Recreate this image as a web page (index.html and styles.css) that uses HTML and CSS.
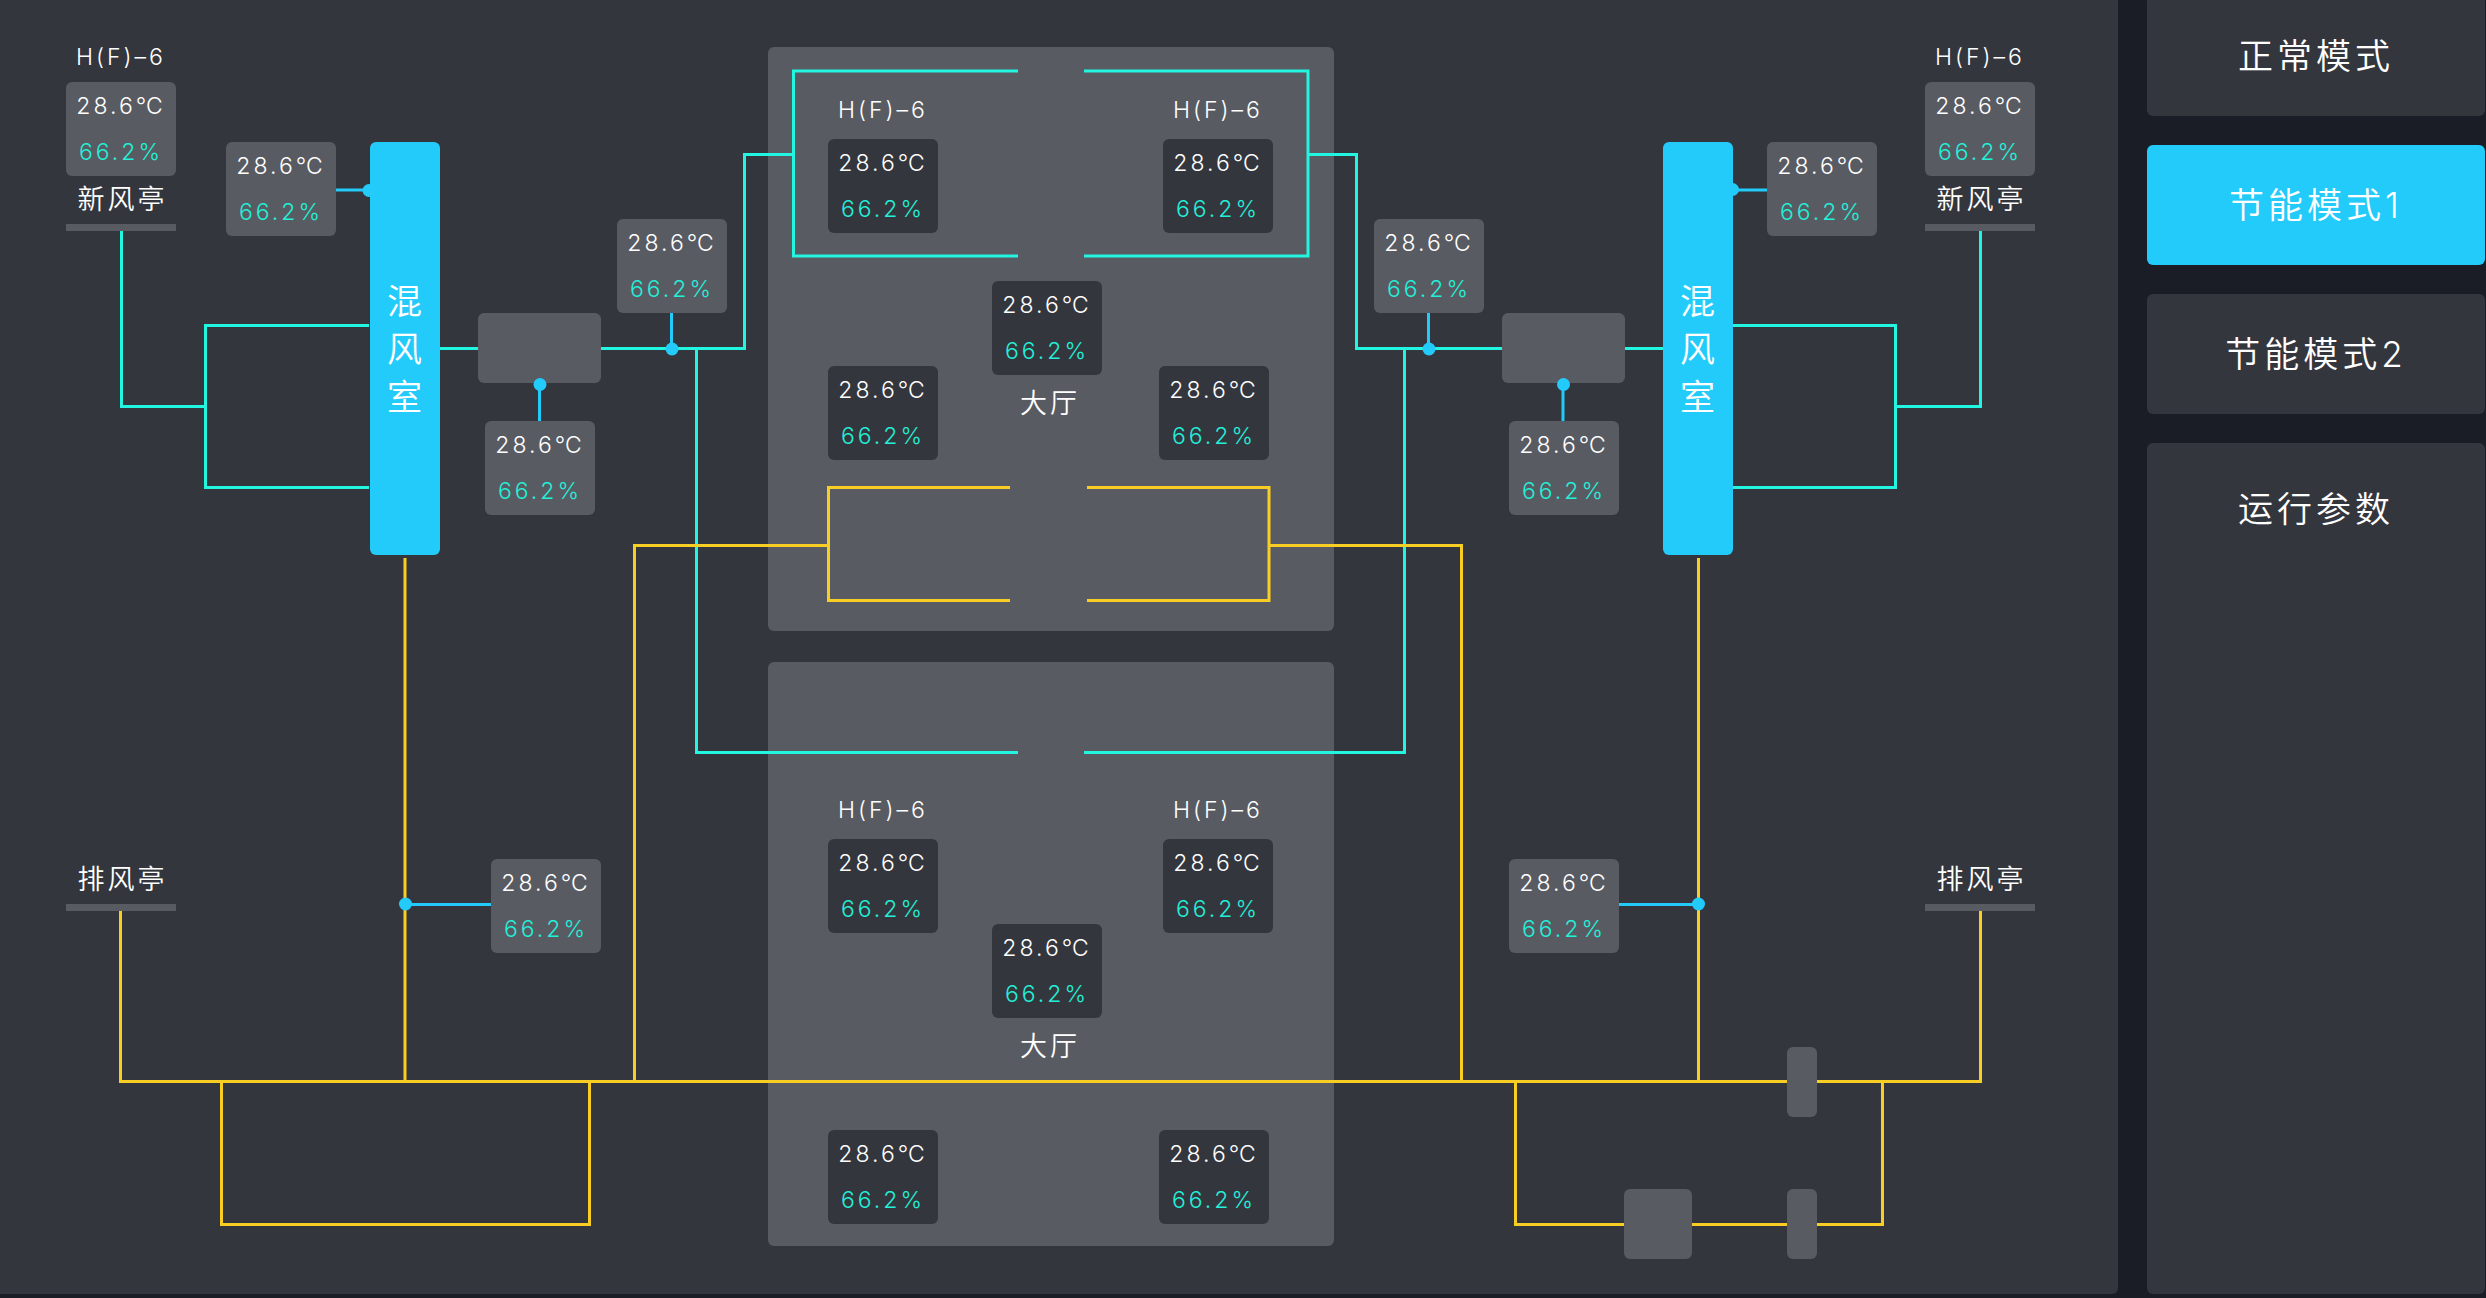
FILE: index.html
```
<!DOCTYPE html>
<html lang="zh-CN">
<head>
<meta charset="utf-8">
<title>通风模式</title>
<link rel="stylesheet" href="styles.css">
</head>
<body>
<main class="diagram">
  <section class="hall hall-upper"></section>
  <section class="hall hall-lower"></section>

  <svg class="wires" aria-hidden="true">
    <g class="supply">
      <path d="M121.500 231V406.500H205.500"/>
      <path d="M369 325.500H205.500V487.500H369"/>
      <path d="M440 348.500H744.500V154.500H793.500"/>
      <path d="M1018 71H793.500V256H1018"/>
      <path d="M696.500 348.500V752.500H1018"/>
      <path d="M1980.500 231V406.500H1895.500"/>
      <path d="M1733 325.500H1895.500V487.500H1733"/>
      <path d="M1663 348.500H1356.500V154.500H1308"/>
      <path d="M1084 71H1308V256H1084"/>
      <path d="M1404.500 348.500V752.500H1084"/>
    </g>
    <g class="exhaust">
      <path d="M120.500 911V1081.500H1980.500V911"/>
      <path d="M221.500 1081.500V1224.500H589.500V1081.500"/>
      <path d="M1515.500 1081.500V1224.500H1882.500V1081.500"/>
      <path d="M405 558V1081.500"/>
      <path d="M1698.500 558V1081.500"/>
      <path d="M828.500 545.500H634.500V1081.500"/>
      <path d="M1010 487.500H828.500V600.500H1010"/>
      <path d="M1269 545.500H1461.500V1081.500"/>
      <path d="M1087 487.500H1269V600.500H1087"/>
    </g>
  </svg>

  <div class="station station-left">
    <span class="code">H(F)–6</span>
    <div class="reading"><span>28.6℃</span><span class="humidity">66.2%</span></div>
    <span class="name">新风亭</span>
    <i class="grille"></i>
  </div>
  <div class="station station-right">
    <span class="code">H(F)–6</span>
    <div class="reading"><span>28.6℃</span><span class="humidity">66.2%</span></div>
    <span class="name">新风亭</span>
    <i class="grille"></i>
  </div>
  <div class="station outlet-left"><span class="name">排风亭</span><i class="grille"></i></div>
  <div class="station outlet-right"><span class="name">排风亭</span><i class="grille"></i></div>

  <div class="mixer mixer-left">混风室</div>
  <div class="mixer mixer-right">混风室</div>
  <i class="unit fan-left"></i>
  <i class="unit fan-right"></i>
  <i class="unit valve-top"></i>
  <i class="unit valve-bottom"></i>
  <i class="unit purifier"></i>

  <div class="reading node mix-in-left"><span>28.6℃</span><span class="humidity">66.2%</span></div>
  <div class="reading node mix-in-right"><span>28.6℃</span><span class="humidity">66.2%</span></div>
  <div class="reading node fan-sensor-left"><span>28.6℃</span><span class="humidity">66.2%</span></div>
  <div class="reading node fan-sensor-right"><span>28.6℃</span><span class="humidity">66.2%</span></div>
  <div class="reading node supply-left"><span>28.6℃</span><span class="humidity">66.2%</span></div>
  <div class="reading node supply-right"><span>28.6℃</span><span class="humidity">66.2%</span></div>
  <div class="reading node return-left"><span>28.6℃</span><span class="humidity">66.2%</span></div>
  <div class="reading node return-right"><span>28.6℃</span><span class="humidity">66.2%</span></div>

  <div class="indoor upper-a">
    <span class="code">H(F)–6</span>
    <div class="reading"><span>28.6℃</span><span class="humidity">66.2%</span></div>
  </div>
  <div class="indoor upper-b">
    <span class="code">H(F)–6</span>
    <div class="reading"><span>28.6℃</span><span class="humidity">66.2%</span></div>
  </div>
  <div class="indoor upper-c">
    <div class="reading"><span>28.6℃</span><span class="humidity">66.2%</span></div>
    <span class="name">大厅</span>
  </div>
  <div class="indoor upper-d"><div class="reading"><span>28.6℃</span><span class="humidity">66.2%</span></div></div>
  <div class="indoor upper-e"><div class="reading"><span>28.6℃</span><span class="humidity">66.2%</span></div></div>

  <div class="indoor lower-a">
    <span class="code">H(F)–6</span>
    <div class="reading"><span>28.6℃</span><span class="humidity">66.2%</span></div>
  </div>
  <div class="indoor lower-b">
    <span class="code">H(F)–6</span>
    <div class="reading"><span>28.6℃</span><span class="humidity">66.2%</span></div>
  </div>
  <div class="indoor lower-c">
    <div class="reading"><span>28.6℃</span><span class="humidity">66.2%</span></div>
    <span class="name">大厅</span>
  </div>
  <div class="indoor lower-d"><div class="reading"><span>28.6℃</span><span class="humidity">66.2%</span></div></div>
  <div class="indoor lower-e"><div class="reading"><span>28.6℃</span><span class="humidity">66.2%</span></div></div>

  <svg class="wires probes" aria-hidden="true">
    <path d="M336 190H369M539.500 384V421M671.500 313V349M405 904.500H491M1733 190H1767M1563 384V421M1428.500 313V349M1619 904.500H1699"/>
    <circle cx="369" cy="190.500" r="6.500"/>
    <circle cx="540" cy="384.500" r="6.500"/>
    <circle cx="672" cy="349" r="6.500"/>
    <circle cx="405.500" cy="904" r="6.500"/>
    <circle cx="1732.500" cy="189.500" r="6.500"/>
    <circle cx="1563.500" cy="384.500" r="6.500"/>
    <circle cx="1429" cy="349" r="6.500"/>
    <circle cx="1698.500" cy="904" r="6.500"/>
  </svg>
</main>

<aside class="sidebar">
  <button class="mode" type="button">正常模式</button>
  <button class="mode active" type="button" aria-pressed="true">节能模式1</button>
  <button class="mode" type="button">节能模式2</button>
  <section class="params"><h2>运行参数</h2></section>
</aside>
</body>
</html>
```
FILE: styles.css
```
:root {
  --page: #1b1d26;
  --panel: #34363e;
  --block: #595b62;
  --blue: #23cbfa;
  --teal: #22f6e1;
  --humidity: #22f0d8;
  --yellow: #f8ce24;
}

* { box-sizing: border-box; }

body {
  margin: 0;
  min-height: 100vh;
  padding: 0 1px 4px 0;
  display: flex;
  gap: 29px;
  background: var(--page);
  color: #fff;
  font-family: Inter, "Noto Sans CJK SC", sans-serif;
  font-size: 23px;
  font-weight: 350;
  letter-spacing: 3px;
}

/* Diagram canvas */
.diagram {
  position: relative;
  flex: 1;
  min-width: 2060px;
  min-height: 1280px;
  background: var(--panel);
  border-radius: 0 0 6px 0;
}

.wires {
  position: absolute;
  inset: 0;
  width: 100%;
  height: 100%;
  fill: none;
  stroke-width: 3;
}
.supply { stroke: var(--teal); }
.exhaust { stroke: var(--yellow); }
.probes path { stroke: var(--blue); }
.probes circle { fill: var(--blue); }

.hall, .station, .mixer, .unit, .node, .indoor { position: absolute; }

.hall {
  left: 768px;
  width: 566px;
  height: 584px;
  border-radius: 6px;
  background: var(--block);
}
.hall-upper { top: 47px; }
.hall-lower { top: 662px; }

.reading {
  width: 110px;
  height: 94px;
  padding-top: 1px;
  display: flex;
  flex-direction: column;
  border-radius: 6px;
  background: var(--block);
  line-height: 46px;
  text-align: center;
  white-space: nowrap;
}
.humidity { color: var(--humidity); }

.station, .indoor {
  width: 110px;
  display: flex;
  flex-direction: column;
  text-align: center;
  white-space: nowrap;
}
.code { line-height: 50px; }
.name {
  padding-left: 3px;
  font-size: 27px;
  line-height: 48px;
}
.grille {
  height: 7px;
  background: var(--block);
}
.indoor .reading { background: var(--panel); }
.indoor .code { margin-bottom: 4px; }
.indoor .name {
  padding-left: 6px;
  line-height: 58px;
}

.mixer {
  top: 142px;
  width: 70px;
  height: 413px;
  padding: 0 17px;
  display: flex;
  align-items: center;
  border-radius: 6px;
  background: var(--blue);
  font-size: 35px;
  line-height: 48px;
  letter-spacing: 0;
  word-break: break-all;
}

.unit {
  width: 30px;
  height: 70px;
  border-radius: 6px;
  background: var(--block);
}

.station-left { left: 66px; top: 32px; }
.station-right { left: 1925px; top: 32px; }
.outlet-left { left: 66px; top: 856px; }
.outlet-right { left: 1925px; top: 856px; }
.mixer-left { left: 370px; }
.mixer-right { left: 1663px; }
.fan-left, .fan-right { top: 313px; width: 123px; }
.fan-left { left: 478px; }
.fan-right { left: 1502px; }
.valve-top { left: 1787px; top: 1047px; }
.valve-bottom { left: 1787px; top: 1189px; }
.purifier { left: 1624px; top: 1189px; width: 68px; }

.mix-in-left { left: 226px; top: 142px; }
.mix-in-right { left: 1767px; top: 142px; }
.fan-sensor-left { left: 485px; top: 421px; }
.fan-sensor-right { left: 1509px; top: 421px; }
.supply-left { left: 617px; top: 219px; }
.supply-right { left: 1374px; top: 219px; }
.return-left { left: 491px; top: 859px; }
.return-right { left: 1509px; top: 859px; }

.upper-a { left: 828px; top: 85px; }
.upper-b { left: 1163px; top: 85px; }
.upper-c { left: 992px; top: 281px; }
.upper-d { left: 828px; top: 366px; }
.upper-e { left: 1159px; top: 366px; }
.lower-a { left: 828px; top: 785px; }
.lower-b { left: 1163px; top: 785px; }
.lower-c { left: 992px; top: 924px; }
.lower-d { left: 828px; top: 1130px; }
.lower-e { left: 1159px; top: 1130px; }

/* Mode switch and parameters */
.sidebar {
  width: 338px;
  flex: none;
  margin-top: -4px;
  display: flex;
  flex-direction: column;
  gap: 29px;
}
.mode {
  height: 120px;
  padding: 0;
  border: 0;
  border-radius: 6px;
  background: var(--panel);
  color: inherit;
  font: inherit;
  font-size: 35px;
  line-height: 48px;
  letter-spacing: 4px;
  cursor: pointer;
}
.mode.active { background: var(--blue); }
.params {
  flex: 1;
  padding-top: 6px;
  border-radius: 6px;
  background: var(--panel);
}
.params h2 {
  margin: 0;
  font-size: 35px;
  font-weight: inherit;
  line-height: 120px;
  letter-spacing: 4px;
  text-align: center;
}
```
